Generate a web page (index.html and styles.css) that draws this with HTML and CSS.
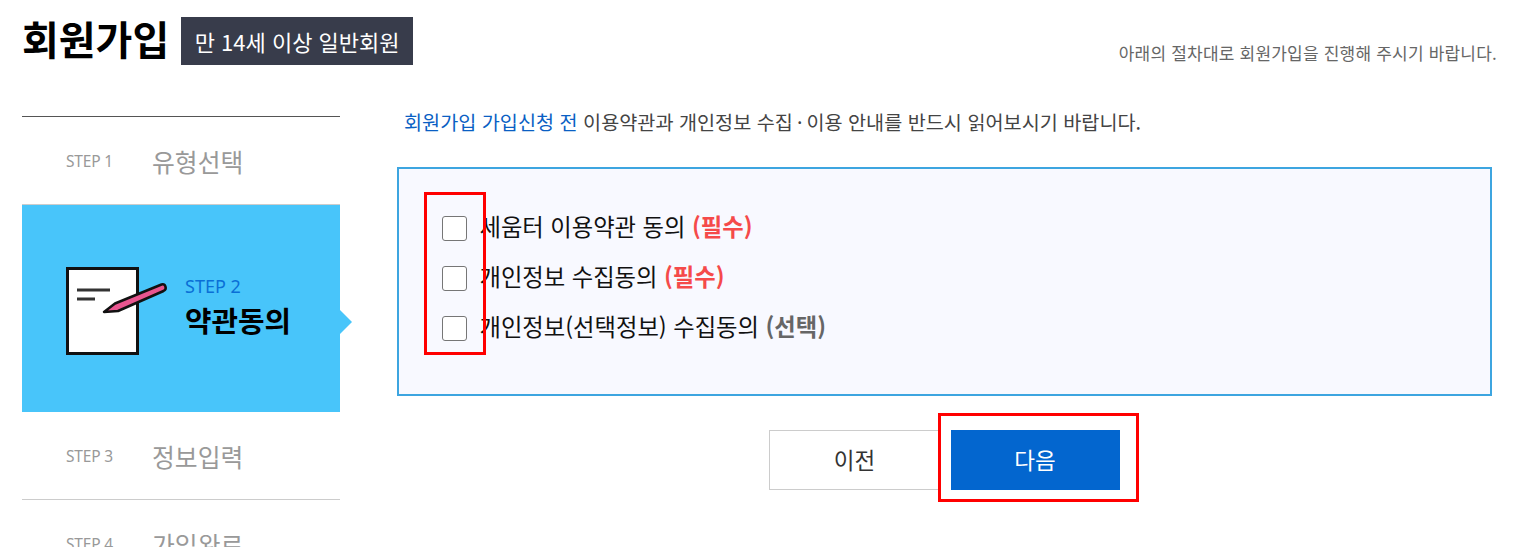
FILE: index.html
```html
<!DOCTYPE html>
<html lang="ko">
<head>
<meta charset="utf-8">
<title>회원가입</title>
<link rel="stylesheet" href="styles.css">
</head>
<body>
<div class="page">
  <header class="head">
    <h1 class="title">회원가입</h1>
    <span class="badge">만 14세 이상 일반회원</span>
    <p class="hint">아래의 절차대로 회원가입을 진행해 주시기 바랍니다.</p>
  </header>
  <div class="layout">
    <ol class="steps">
      <li class="step step-first"><span class="num">STEP 1</span><span class="name">유형선택</span></li>
      <li class="step-active">
        <svg class="step-icon" width="102" height="88" viewBox="0 0 102 88">
          <rect x="1.500" y="1.500" width="70" height="85" fill="#fff" stroke="#111" stroke-width="3"/>
          <path d="M11 23h33M11 32h18" stroke="#333" stroke-width="3" fill="none"/>
          <path d="M38 45 49 36.500 95.500 17.500c4-1 6 4.500 2 6.500L52 44z" fill="#e8558f" stroke="#111" stroke-width="2.500" stroke-linejoin="round"/>
        </svg>
        <div class="active-text"><span class="active-num">STEP 2</span><strong class="active-name">약관동의</strong></div>
      </li>
      <li class="step step-third"><span class="num">STEP 3</span><span class="name">정보입력</span></li>
      <li class="step step-last"><span class="num">STEP 4</span><span class="name">가입완료</span></li>
    </ol>
    <main class="main">
      <p class="intro"><span class="intro-blue">회원가입 가입신청 전</span> 이용약관과 개인정보 수집<span class="dot">·</span>이용 안내를 반드시 읽어보시기 바랍니다.</p>
      <section class="agree">
        <label class="agree-row"><input class="check" type="checkbox"><span class="agree-text">세움터 이용약관 동의 <b class="req">(필수)</b></span></label>
        <label class="agree-row"><input class="check" type="checkbox"><span class="agree-text">개인정보 수집동의 <b class="req">(필수)</b></span></label>
        <label class="agree-row"><input class="check" type="checkbox"><span class="agree-text">개인정보(선택정보) 수집동의 <b class="opt">(선택)</b></span></label>
        <div class="mark mark-checks"></div>
      </section>
      <div class="actions">
        <button class="btn btn-prev" type="button">이전</button>
        <button class="btn btn-next" type="button">다음</button>
        <div class="mark mark-next"></div>
      </div>
    </main>
  </div>
</div>
</body>
</html>
```
FILE: styles.css
```css
* { box-sizing: border-box; }
html, body { margin: 0; height: 547px; overflow: hidden; background: #fff; }
body { font-family: "Noto Sans CJK KR", "Noto Sans", sans-serif; color: #111; }
.page { padding: 0 28px 0 22px; height: 547px; overflow: hidden; }
.head { display: flex; align-items: flex-start; height: 116px; padding-top: 17px; }
.title { margin: 0 12px 0 0; font-size: 40px; line-height: 42px; font-weight: 700; color: #000; }
.badge { height: 48px; padding: 0 13.500px; background: #383c4b; color: #fff; font-size: 22px; line-height: 48px; }
.hint { margin: 24px 0 0 auto; font-size: 17px; line-height: 24px; color: #666; letter-spacing: 0.2px; }
.layout { display: flex; gap: 57px; }
.steps { list-style: none; margin: 0; padding: 0; width: 318px; flex: none; border-top: 1px solid #555; }
.step { display: flex; align-items: center; height: 87px; padding-left: 44px; border-bottom: 1px solid #ccc; }
.step-first { height: 88px; }
.step-third { height: 88px; }
.step-last { border: 0; }
.num { width: 86px; font-size: 15.500px; color: #999; font-family: "Noto Sans", sans-serif; letter-spacing: -0.2px; }
.name { font-size: 24.800px; color: #999; }
.step-active { position: relative; display: flex; align-items: center; height: 207px; padding: 0 0 3px 44px; background: #48c5fa; }
.step-active::after { content: ""; position: absolute; left: 318px; top: 105px; border-left: 12px solid #48c5fa; border-top: 12px solid transparent; border-bottom: 12px solid transparent; }
.step-icon { flex: none; margin-top: 8px; }
.active-text { display: flex; flex-direction: column; margin: 2px 0 0 17px; }
.active-num { font-size: 18px; line-height: 24px; color: #0a6fd6; font-family: "Noto Sans", sans-serif; }
.active-name { font-size: 28.800px; line-height: 44px; color: #000; }
.main { width: 1095px; flex: none; }
.intro { margin: -7px 0 0 7px; height: 58px; font-size: 19.650px; line-height: 26px; color: #444; }
.intro-blue { color: #0a5fc4; }
.dot { margin: 0 4px; }
.agree { position: relative; height: 229px; padding: 34px 0 0 43px; border: 2px solid #3da5e0; background: #f8f9ff; }
.agree-row { display: flex; align-items: center; gap: 12.500px; height: 50px; font-size: 23.300px; color: #111; }
.agree-text { margin-bottom: 5px; }
.check { appearance: none; width: 25px; height: 25px; margin: 0; flex: none; background: #fff; border: 1px solid #767676; border-radius: 3px; }
.req { color: #f54a4a; }
.opt { color: #666; }
.mark { position: absolute; border: 3px solid #f00; pointer-events: none; }
.mark-checks { left: 25px; top: 23px; width: 62px; height: 163px; }
.actions { position: relative; display: flex; justify-content: center; gap: 10px; margin: 34px 0 0 -1px; }
.btn { width: 172px; height: 60px; padding: 0 0 3px; font: inherit; font-size: 22.500px; border: 1px solid #ccc; background: #fff; color: #333; }
.btn-next { width: 169px; border: 0; background: #0366cf; color: #fff; }
.mark-next { left: 542px; top: -17px; width: 201px; height: 89px; }
```
